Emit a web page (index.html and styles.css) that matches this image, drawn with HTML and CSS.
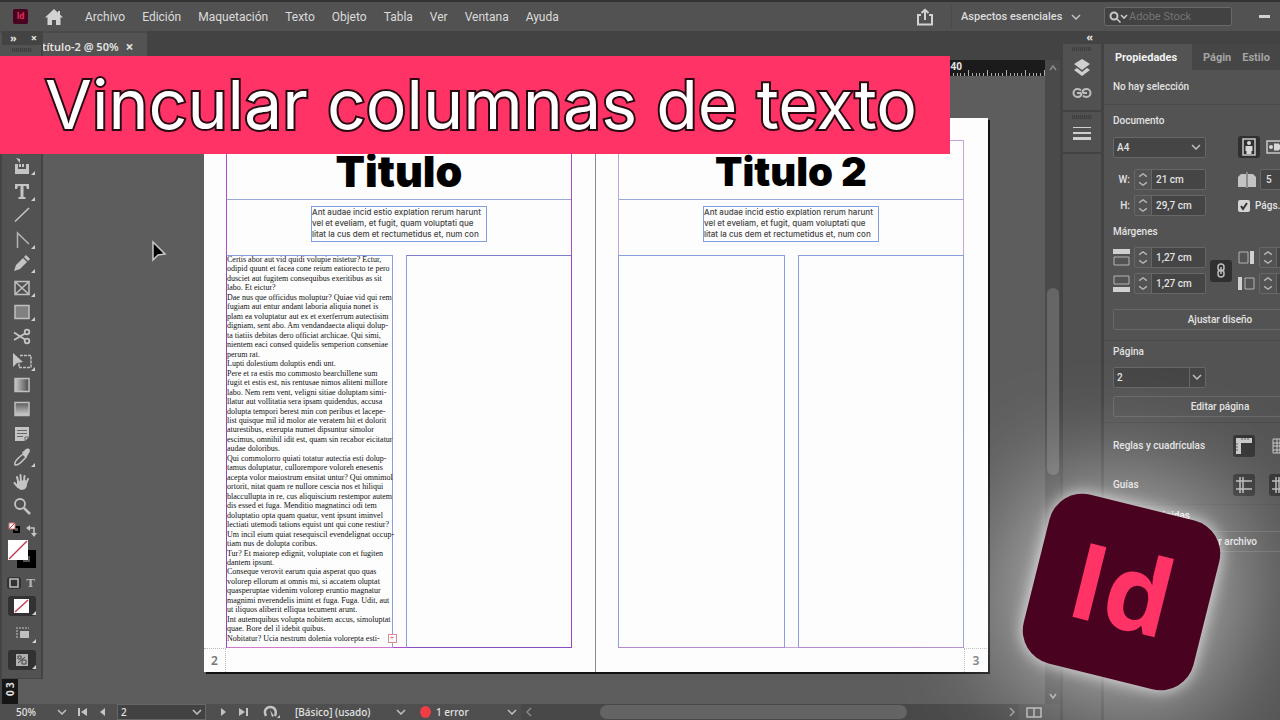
FILE: index.html
```html
<!DOCTYPE html>
<html lang="es">
<head>
    <meta charset="UTF-8">
    <meta name="viewport" content="width=device-width, initial-scale=1.0">
    <title>Vincular columnas de texto</title>
    <link rel="stylesheet" href="styles.css">
</head>
<body>
    <header class="menubar">
        <span class="app-badge">Id</span>
        <button class="icon-btn home" aria-label="Inicio">
            <svg width="20" height="18" viewBox="0 0 20 18"><path d="M10 1 1 9.500h2.500V17H8v-5h4v5h4.500V9.500H19L16 6.500V3h-2v1.700z" fill="#d2d2d2"/></svg>
        </button>
        <nav class="menu">
            <a href="#">Archivo</a>
            <a href="#">Edición</a>
            <a href="#">Maquetación</a>
            <a href="#">Texto</a>
            <a href="#">Objeto</a>
            <a href="#">Tabla</a>
            <a href="#">Ver</a>
            <a href="#">Ventana</a>
            <a href="#">Ayuda</a>
        </nav>
        <button class="icon-btn share" aria-label="Compartir">
            <svg width="18" height="18" viewBox="0 0 18 18" fill="none" stroke="#d2d2d2" stroke-width="2"><path d="M5 7H2v9.500h14V7h-3M9 12V2M5.500 5 9 1.800 12.500 5"/></svg>
        </button>
        <select class="workspace-select" aria-label="Espacio de trabajo"><option>Aspectos esenciales</option></select>
        <label class="search">
            <svg width="20" height="12" viewBox="0 0 20 12" fill="none" stroke="#c8c8c8" stroke-width="2"><circle cx="5" cy="5" r="3.500"/><path d="m7.500 7.500 4 4M12 4l3 3 3-3" stroke-width="1.600"/></svg>
            <input type="text" placeholder="Adobe Stock" aria-label="Buscar en Adobe Stock">
        </label>
        <button class="minimize" aria-label="Minimizar"><span></span></button>
    </header>

    <div class="workspace">
        <main class="document">
            <div class="tabs">
                <div class="tab">título-2 @ 50% <button class="close" aria-label="Cerrar">×</button></div>
            </div>
            <div class="view">
                <div class="ruler-v"><span>3</span><span>0</span></div>
                <div class="canvas">
                    <div class="ruler-h">
                        <svg width="100%" height="16">
                            <defs><pattern id="ticks" width="19" height="16" patternUnits="userSpaceOnUse"><path d="M.5 10v6M4.500 13v3M8.500 13v3M11.500 13v3M15.500 13v3" stroke="#aaa"/></pattern></defs>
                            <rect width="100%" height="16" fill="url(#ticks)"/>
                        </svg>
                        <span>40</span>
                    </div>
                    <div class="spread">
                        <section class="page left">
                            <div class="margins">
                                <h1 class="title big">Titulo</h1>
                                <p class="intro">Ant audae incid estio explation rerum harunt<br>vel et eveliam, et fugit, quam voluptati que<br>litat la cus dem et rectumetidus et, num con</p>
                                <div class="columns">
                                    <div class="column story" id="story"></div>
                                    <div class="column"></div>
                                </div>
                            </div>
                            <span class="folio">2</span>
                        </section>
                        <section class="page right">
                            <div class="margins">
                                <h1 class="title">Titulo 2</h1>
                                <p class="intro">Ant audae incid estio explation rerum harunt<br>vel et eveliam, et fugit, quam voluptati que<br>litat la cus dem et rectumetidus et, num con</p>
                                <div class="columns">
                                    <div class="column"></div>
                                    <div class="column"></div>
                                </div>
                            </div>
                            <span class="folio">3</span>
                        </section>
                    </div>
                </div>
                <div class="vscroll">
                    <svg width="10" height="8" viewBox="0 0 10 8" fill="none" stroke="#8c8c8c" stroke-width="1.500"><path d="m2 6 3-4 3 4"/></svg>
                    <div class="track"><div class="thumb"></div></div>
                    <svg width="10" height="8" viewBox="0 0 10 8" fill="none" stroke="#a8a8a8" stroke-width="1.500"><path d="m2 2 3 4 3-4"/></svg>
                </div>
            </div>
            <footer class="statusbar">
                <select class="zoom-level" aria-label="Zoom"><option>50%</option></select>
                <button class="icon-btn first" aria-label="Primera página"><svg width="9" height="10" viewBox="0 0 9 10" fill="#c4c4c4"><path d="M0 1h2v8H0zM9 1v8L3 5z"/></svg></button>
                <button class="icon-btn prev" aria-label="Página anterior"><svg width="6" height="10" viewBox="0 0 6 10" fill="#c4c4c4"><path d="M5 1v8L0 5z"/></svg></button>
                <select class="page-select" aria-label="Página actual"><option>2</option></select>
                <button class="icon-btn next" aria-label="Página siguiente"><svg width="6" height="10" viewBox="0 0 6 10" fill="#c4c4c4"><path d="M1 1v8l5-4z"/></svg></button>
                <button class="icon-btn last" aria-label="Última página"><svg width="9" height="10" viewBox="0 0 9 10" fill="#c4c4c4"><path d="M7 1h2v8H7zM0 1v8l6-4z"/></svg></button>
                <button class="icon-btn open" aria-label="Abrir"><svg width="18" height="14" viewBox="0 0 18 14" fill="none"><path d="M3 11C0 5 4 2 7 2c5 0 7 4 5 9" stroke="#c4c4c4" stroke-width="2.500"/><path d="m7 5 4 6-2 1z" fill="#c4c4c4"/><path d="M17 10v3h-3z" fill="#c4c4c4"/></svg></button>
                <select class="preflight" aria-label="Perfil de comprobación"><option>[Básico] (usado)</option></select>
                <span class="error-dot"></span>
                <select class="errors" aria-label="Errores"><option>1 error</option></select>
                <div class="hscroll">
                    <svg width="6" height="10" viewBox="0 0 6 10" fill="none" stroke="#888" stroke-width="1.500"><path d="M5 1 1 5l4 4"/></svg>
                    <div class="track"><div class="thumb"></div></div>
                    <svg width="6" height="10" viewBox="0 0 6 10" fill="none" stroke="#999" stroke-width="1.500"><path d="m1 1 4 4-4 4"/></svg>
                </div>
                <button class="icon-btn split" aria-label="Dividir vista"><svg width="16" height="11" viewBox="0 0 16 11" fill="none" stroke="#b4b4b4" stroke-width="1.500"><path d="M1 1h14v9H1zM8 1v9"/></svg></button>
            </footer>
        </main>

        <aside class="dock">
            <div class="dock-head">«</div>
            <div class="dock-group tall">
                <span class="grip"></span>
                <button class="icon-btn" aria-label="Capas"><svg width="18" height="18" viewBox="0 0 18 18" fill="#cfcfcf"><path d="m9 0 8 5-8 6-8-6z"/><path d="m1 11 3-2 5 4 5-4 3 2-8 6z"/></svg></button>
                <button class="icon-btn" aria-label="Vínculos"><svg width="20" height="12" viewBox="0 0 20 12" fill="none" stroke="#bdbdbd" stroke-width="2"><path d="M9 3.500C8 2 7 2 5.500 2a4 4 0 0 0 0 8C8 10 9.500 9 9.500 6M11 8.500c1 1.500 2 1.500 3.500 1.500a4 4 0 0 0 0-8c-2.500 0-4 1-4 4M5 6h4M11 6h4"/></svg></button>
            </div>
            <div class="dock-group">
                <span class="grip"></span>
                <button class="icon-btn" aria-label="Trazo"><svg width="18" height="14" viewBox="0 0 18 14" fill="#cfcfcf"><path d="M0 0h18v1H0zM0 5h18v2H0zM0 10h18v3H0z"/></svg></button>
            </div>
        </aside>

        <aside class="properties">
            <div class="panel">
                <div class="panel-tabs">
                    <button class="active">Propiedades</button>
                    <button>Págin</button>
                    <button>Estilo</button>
                </div>
                <p class="selection">No hay selección</p>
                <section>
                    <h2>Documento</h2>
                    <div class="row gap-lg">
                        <select class="field" aria-label="Tamaño de página"><option>A4</option></select>
                        <button class="toggle" aria-label="Vertical"><svg width="20" height="20" viewBox="0 0 20 20"><path d="M4 2h12v16H4z" fill="none" stroke="#c8c8c8" stroke-width="1.500"/><circle cx="10" cy="6" r="2" fill="#d8d8d8"/><path d="M6.500 9h7v5h-1v3h-5v-3h-1z" fill="#d8d8d8"/></svg></button>
                        <button class="toggle plain" aria-label="Horizontal"><svg width="20" height="20" viewBox="0 0 20 20"><path d="M2 4h16v12H2z" fill="none" stroke="#c8c8c8" stroke-width="1.500"/><circle cx="6" cy="10" r="2" fill="#d8d8d8"/><path d="M9 6.500h5v1h3v5h-3v1H9z" fill="#d8d8d8"/></svg></button>
                    </div>
                    <div class="row">
                        <label class="caption" for="width">W:</label>
                        <div class="stepper"><svg class="arrows"><use href="#arrows"/></svg><input type="text" id="width" value="21 cm"></div>
                        <span class="link-space"></span>
                        <svg width="18" height="16" viewBox="0 0 18 16" fill="#c4c4c4"><path d="M0 5l3-3h5v13H0zM10 2h5l3 3v10h-8zM8.500 0h1v16h-1z"/></svg>
                        <input class="field narrow" type="text" value="5" aria-label="Número de páginas">
                    </div>
                    <div class="row">
                        <label class="caption" for="height">H:</label>
                        <div class="stepper"><svg class="arrows"><use href="#arrows"/></svg><input type="text" id="height" value="29,7 cm"></div>
                        <span class="link-space"></span>
                        <label class="check"><input type="checkbox" checked>Págs.</label>
                    </div>
                </section>
                <section class="follow">
                    <h2>Márgenes</h2>
                    <div class="margin-fields">
                        <svg width="17" height="17" viewBox="0 0 17 17"><path d="M0 0h17v5H0z" fill="#d0d0d0"/><path d="M1 8h15v8H1z" fill="none" stroke="#b4b4b4"/></svg>
                        <div class="stepper"><svg class="arrows"><use href="#arrows"/></svg><input type="text" aria-label="Margen superior" value="1,27 cm"></div>
                        <button class="toggle chain" aria-label="Igualar márgenes"><svg width="8" height="15" viewBox="0 0 8 15" fill="none" stroke="#bdbdbd" stroke-width="1.500"><rect x="1" y="1" width="6" height="7" rx="3"/><rect x="1" y="7" width="6" height="7" rx="3"/><path d="M4 4v7"/></svg></button>
                        <svg width="17" height="15" viewBox="0 0 17 15"><path d="M1 2h9v11H1z" fill="none" stroke="#b4b4b4"/><path d="M12 1h4v13h-4z" fill="#d0d0d0"/></svg>
                        <div class="stepper"><svg class="arrows"><use href="#arrows"/></svg><input type="text" aria-label="Margen interior"></div>
                        <svg width="17" height="17" viewBox="0 0 17 17"><path d="M1 1h15v8H1z" fill="none" stroke="#b4b4b4"/><path d="M0 12h17v5H0z" fill="#d0d0d0"/></svg>
                        <div class="stepper"><svg class="arrows"><use href="#arrows"/></svg><input type="text" aria-label="Margen inferior" value="1,27 cm"></div>
                        <svg width="17" height="15" viewBox="0 0 17 15"><path d="M7 2h9v11H7z" fill="none" stroke="#b4b4b4"/><path d="M0 1h4v13H0z" fill="#d0d0d0"/></svg>
                        <div class="stepper"><svg class="arrows"><use href="#arrows"/></svg><input type="text" aria-label="Margen exterior"></div>
                    </div>
                    <button class="wide">Ajustar diseño</button>
                </section>
                <section class="ruled">
                    <h2>Página</h2>
                    <select class="field split-arrow" aria-label="Página"><option>2</option></select>
                    <button class="wide close-up">Editar página</button>
                </section>
                <section class="ruled options">
                    <div class="option">
                        <span>Reglas y cuadrículas</span>
                        <button class="toggle" aria-label="Reglas"><svg width="20" height="20" viewBox="0 0 20 20"><path d="M2 2h16v5H7v11H2z" fill="#c8c8c8"/><path d="M8 2v2M11 2v2M14 2v2M2 8h2M2 11h2M2 14h2" stroke="#555"/></svg></button>
                        <button class="toggle plain" aria-label="Cuadrícula"><svg width="20" height="20" viewBox="0 0 20 20" fill="none" stroke="#c8c8c8"><path d="M3 3h14v14H3zM3 7h14M3 10h14M3 14h14M7 3v14M10 3v14M14 3v14"/></svg></button>
                    </div>
                    <div class="option">
                        <span>Guías</span>
                        <button class="toggle" aria-label="Guías"><svg width="20" height="20" viewBox="0 0 20 20" stroke="#b8b8b8" stroke-width="1.500"><path d="M6 2v16M9 2v16M2 6h16M2 14h16"/></svg></button>
                        <button class="toggle" aria-label="Guías inteligentes"><svg width="20" height="20" viewBox="0 0 20 20" stroke="#b8b8b8" stroke-width="1.500"><path d="M6 2v16M9 2v16M2 6h16M2 14h16"/></svg></button>
                    </div>
                </section>
                <section class="ruled">
                    <h2>Acciones rápidas</h2>
                    <button class="wide">Importar archivo</button>
                </section>
            </div>
        </aside>
    </div>

    <!-- floating tools palette -->
    <aside class="toolbar">
        <div class="toolbar-head"><span>»</span><span>×</span></div>
        <span class="grip"></span>
        <div class="tools">
            <button aria-label="Recopilador de contenido"><svg viewBox="0 0 32 24"><path d="M9 9v10h14V9h-3v5h-8V9z" fill="#c4c4c4"/><path d="M14 9v3M17 9v3" stroke="#c4c4c4" stroke-width="2"/><path d="m10 3 4 1v4z" fill="#c4c4c4"/><path class="more" d="M29 16v4h-4z"/></svg></button>
            <button aria-label="Texto"><svg viewBox="0 0 32 24"><path d="M9 5h14v5h-2l-1-3h-2.500v11h2v2h-7v-2h2V7H12l-1 3H9z" fill="#c4c4c4"/><path class="more" d="M29 18v4h-4z"/></svg></button>
            <button aria-label="Línea"><svg viewBox="0 0 32 24"><path d="M9 18.500 23 5" stroke="#c4c4c4" stroke-width="1.600"/></svg></button>
            <button aria-label="Pluma"><svg viewBox="0 0 32 24"><path d="M11.500 20V5L23 16" fill="none" stroke="#b4b4b4" stroke-width="1.500"/><path class="more" d="M29 17v4h-4z"/></svg></button>
            <button aria-label="Lápiz"><svg viewBox="0 0 32 24"><path d="m8 19 2-6 7-7 4 4-7 7zM18 5l2-2 4 4-2 2z" fill="#c4c4c4"/><path class="more" d="M29 17v4h-4z"/></svg></button>
            <button aria-label="Marco rectangular"><svg viewBox="0 0 32 24"><path d="M9 5.500h14v13H9zM9 5.500l14 13M23 5.500 9 18.500" fill="none" stroke="#c0c0c0" stroke-width="1.500"/><path class="more" d="M29 17v4h-4z"/></svg></button>
            <button aria-label="Rectángulo"><svg viewBox="0 0 32 24"><path d="M9 5.500h14v13H9z" fill="#808080" stroke="#c0c0c0" stroke-width="1.500"/><path class="more" d="M29 17v4h-4z"/></svg></button>
            <button aria-label="Tijeras"><svg viewBox="0 0 32 24" fill="none" stroke="#c4c4c4" stroke-width="1.800"><circle cx="21" cy="8" r="2.300"/><circle cx="21" cy="17" r="2.300"/><path d="m19 15.500-11-7M19 9.500l-11 6.500"/></svg></button>
            <button aria-label="Transformación libre"><svg viewBox="0 0 32 24"><path d="M14 6.500h11v12H13v-5" fill="none" stroke="#c0c0c0" stroke-width="1.500" stroke-dasharray="3 1"/><path d="M7 4v14l4-4 6-1z" fill="#c4c4c4"/><path class="more" d="M29 18v4h-4z"/></svg></button>
            <button aria-label="Degradado"><svg viewBox="0 0 32 24"><defs><linearGradient id="gh"><stop offset="0" stop-color="#c8c8c8"/><stop offset="1" stop-color="#4a4a4a"/></linearGradient><linearGradient id="gv" x2="0" y2="1"><stop offset="0" stop-color="#5a5a5a"/><stop offset="1" stop-color="#cfcfcf"/></linearGradient></defs><path d="M9 5.500h14v13H9z" fill="url(#gh)" stroke="#c0c0c0" stroke-width="1.500"/></svg></button>
            <button aria-label="Desvanecimiento"><svg viewBox="0 0 32 24"><path d="M9 5.500h14v13H9z" fill="url(#gv)" stroke="#c0c0c0" stroke-width="1.500"/></svg></button>
            <button aria-label="Nota"><svg viewBox="0 0 32 24"><path d="M9 6h14v10l-4 4H9z" fill="#c4c4c4"/><path d="M11 9.500h10M11 12.500h10M11 15.500h6" stroke="#666"/><path d="M19 20v-4h4" fill="none" stroke="#666"/></svg></button>
            <button aria-label="Cuentagotas"><svg viewBox="0 0 32 24"><path d="M9 20c-1-3 1-5 8-11l3 3c-6 7-8 8-11 8z" fill="none" stroke="#c4c4c4" stroke-width="1.500"/><path d="m16 7 2-1c3-5 8-2 5 2l-3 5z" fill="#c4c4c4"/><path class="more" d="M29 18v4h-4z"/></svg></button>
            <button aria-label="Mano"><svg viewBox="0 0 32 24" stroke="#c4c4c4" stroke-width="2" stroke-linecap="round"><path d="M12 12v4c2 4 7 4 8-1l-1-4z" fill="#c4c4c4"/><path d="M12.500 13 11 7M15 12l-.5-7M18 12l.5-6M20 14l2-5M12 17l-3.500-4"/></svg></button>
            <button aria-label="Zoom"><svg viewBox="0 0 32 24" fill="none" stroke="#c4c4c4"><circle cx="14" cy="10" r="5" stroke-width="1.800"/><path d="m18 14 6 6" stroke-width="2.500"/></svg></button>
        </div>
        <button class="swatches" aria-label="Relleno y trazo">
            <svg width="32" height="50" viewBox="0 0 32 50">
                <path d="M8 8h5v5H8z" fill="none" stroke="#000" stroke-width="2"/>
                <path d="M3 4h6v6H3z" fill="#fff" stroke="#c77" /><path d="m3 10 6-6" stroke="#d03040"/>
                <path d="M22 9h6v6" fill="none" stroke="#c4c4c4" stroke-width="1.500"/><path d="m20 9 4-3v6zM28 18l-3-4h6z" fill="#c4c4c4"/>
                <path d="M14 34h13v12H14z" fill="none" stroke="#000" stroke-width="6"/>
                <path d="M2 21h20v20H2z" fill="#fff"/>
                <path d="m3 40 18-18" stroke="#c23a50" stroke-width="1.500"/>
            </svg>
        </button>
        <div class="format-row">
            <button class="dark" aria-label="Contenedor"><svg width="14" height="12" viewBox="0 0 14 12"><path d="M3 2h8v8H3z" fill="none" stroke="#c0c0c0" stroke-width="1.500"/></svg></button>
            <button class="letter" aria-label="Formato de texto">T</button>
        </div>
        <button class="dark wide-tool" aria-label="Aplicar ninguno"><svg width="28" height="20" viewBox="0 0 28 20"><path d="M6 3h15v14H6z" fill="#fff"/><path d="M7 16 20 4" stroke="#c8405a" stroke-width="1.500"/><path class="more" d="M28 15v4h-4z"/></svg></button>
        <button class="wide-tool" aria-label="Vista"><svg width="28" height="20" viewBox="0 0 28 20"><path d="M12 8h9v7h-9z" fill="#c0c0c0"/><path d="M8 5h13M9 7v8" stroke="#a0a0a0" stroke-width="1.500" stroke-dasharray="2 1"/><path class="more" d="M28 16v4h-4z"/></svg></button>
        <button class="dark wide-tool" aria-label="Modo de pantalla"><svg width="28" height="20" viewBox="0 0 28 20"><path d="M8 4h12v12H8z" fill="#b0b0b0"/><path d="M10 6h3v3h-3zM14 10h4v4h-4zM10 13l7-6" fill="none" stroke="#444"/><path class="more" d="M28 15v4h-4z"/></svg></button>
    </aside>

    <svg class="cursor" width="16" height="24" viewBox="0 0 16 24"><path d="M2 2v18l5-5 7-1z" fill="#000" stroke="#c8c8c8" stroke-width="1.500"/></svg>

    <div class="banner">Vincular columnas de texto</div>
    <div class="id-logo">Id</div>

    <svg class="defs" width="0" height="0">
        <symbol id="arrows" viewBox="0 0 16 20"><path d="m4 7 4-3 4 3M4 13l4 3 4-3" fill="none" stroke="#b8b8b8" stroke-width="1.500"/></symbol>
    </svg>

    <script src="script.js"></script>
</body>
</html>
```
FILE: styles.css
```css
* {
    box-sizing: border-box;
}

body {
    margin: 0;
    height: 100vh;
    display: flex;
    flex-direction: column;
    position: relative;
    overflow: hidden;
    background-color: #434343;
    color: #e2e2e2;
    font-family: "Noto Sans", sans-serif;
    font-size: 11px;
}

button, input, select {
    font: inherit;
    color: inherit;
    margin: 0;
    padding: 0;
    border: none;
    border-radius: 0;
    background: none;
    outline: none;
}

svg {
    display: block;
    flex: none;
}

h1, h2, p {
    margin: 0;
}

select {
    appearance: none;
    background: url("data:image/svg+xml,%3Csvg xmlns='http://www.w3.org/2000/svg' width='10' height='6'%3E%3Cpath d='M1 1l4 4 4-4' fill='none' stroke='%23c0c0c0' stroke-width='1.500'/%3E%3C/svg%3E") no-repeat right center;
}

.icon-btn {
    display: flex;
    align-items: center;
    justify-content: center;
    flex: none;
}

.more {
    fill: #d0d0d0;
    stroke: none;
}

/* menu bar */
.menubar {
    flex: none;
    display: flex;
    align-items: center;
    height: 31px;
    padding-left: 13px;
    border-top: 2px solid #333;
    background-color: #525252;
    font-family: "Roboto", sans-serif;
    font-size: 12px;
}

.app-badge {
    width: 15px;
    height: 15px;
    border-radius: 2px;
    background-color: #49021f;
    color: #e0305c;
    font-size: 9px;
    font-weight: bold;
    line-height: 15px;
    text-align: center;
}

.home {
    margin-left: 16px;
}

.menu {
    display: flex;
    gap: 17px;
    margin-left: 21px;
    white-space: nowrap;
}

.menu a {
    color: #dcdcdc;
    text-decoration: none;
}

.share {
    margin-left: auto;
    margin-right: 17px;
}

.workspace-select {
    width: 132px;
    height: 24px;
    padding-left: 9px;
    border-left: 1px solid #4a4a4a;
    background-position: right 2px center;
    color: #dcdcdc;
    font-size: 11px;
    font-weight: 500;
}

.search {
    display: flex;
    align-items: center;
    width: 128px;
    height: 19px;
    margin-left: 21px;
    padding-left: 4px;
    border: 1px solid #686868;
    border-radius: 2px;
    background-color: #424242;
}

.search input {
    width: 90px;
    font-size: 11px;
}

.search input::placeholder {
    color: #747474;
}

.minimize {
    display: flex;
    align-items: center;
    justify-content: center;
    width: 32px;
    height: 22px;
    margin-left: 16px;
}

.minimize span {
    width: 11px;
    height: 3px;
    background-color: #d0d0d0;
}

/* layout */
.workspace {
    flex: 1;
    display: flex;
    min-height: 0;
}

.document {
    flex: 1;
    min-width: 0;
    display: flex;
    flex-direction: column;
    margin-right: 3px;
}

.tabs {
    flex: none;
    height: 29px;
    display: flex;
}

.tab {
    display: flex;
    align-items: center;
    gap: 7px;
    padding: 0 13px 0 42px;
    border-top: 2px solid #4a4a4a;
    background-color: #535353;
    font-weight: 600;
}

.close {
    font-size: 14px;
    font-weight: bold;
    line-height: 14px;
}

.view {
    flex: 1;
    display: flex;
    min-height: 0;
}

.ruler-v {
    flex: none;
    width: 18px;
    display: flex;
    flex-direction: column;
    justify-content: flex-end;
    padding-left: 4px;
    padding-bottom: 7px;
    border-left: 2px solid #444;
    background-color: #161616;
}

.ruler-v span {
    width: 8px;
    height: 8px;
    font-size: 10px;
    font-weight: bold;
    line-height: 8px;
    text-align: center;
    transform: rotate(-90deg);
}

.canvas {
    flex: 1;
    min-width: 0;
    overflow: hidden;
    background-color: #5d5d5d;
}

.ruler-h {
    display: grid;
    height: 16px;
    background-color: #1b1b1b;
}

.ruler-h svg, .ruler-h span {
    grid-area: 1 / 1;
}

.ruler-h span {
    justify-self: end;
    padding-right: 83px;
    font-size: 10px;
    font-weight: bold;
    line-height: 12px;
}

.vscroll {
    flex: none;
    width: 15px;
    display: flex;
    flex-direction: column;
    align-items: center;
    gap: 4px;
    padding: 4px 0;
    background-color: #4a4a4a;
}

.vscroll .track {
    flex: 1;
    display: flex;
    flex-direction: column;
    padding: 212px 0 213px;
}

.vscroll .thumb {
    flex: 1;
    width: 12px;
    border-radius: 6px;
    background-color: #666;
}

/* page spread, 50% zoom */
.spread {
    display: flex;
    width: 784px;
    height: 554px;
    margin: 42px 0 0 186px;
    background-color: #fdfdfd;
    box-shadow: 2px 2px 0 #111;
    color: #111;
}

.page {
    display: grid;
    grid-template-columns: 22px 346px 24px;
    grid-template-rows: 22px 508px 24px;
}

.page.left {
    width: 392px;
    border-right: 1px solid #8a8a8a;
}

.page.right {
    grid-template-columns: 22px 346px 23px;
}

.margins {
    grid-area: 2 / 2;
    display: flex;
    flex-direction: column;
    align-items: center;
    border: 1px solid #b04cc8;
}

.right .margins {
    border-color: #c4a4da;
}

.title {
    width: 100%;
    height: 59px;
    border-bottom: 1px solid #98a9d6;
    color: #000;
    font-family: "Inter", sans-serif;
    font-size: 40px;
    font-weight: 900;
    line-height: 61px;
    text-align: center;
}

.title.big {
    font-size: 43px;
}

.intro {
    width: 176px;
    height: 36px;
    margin-top: 6px;
    border: 1px solid #7f9fdf;
    color: #444;
    font-family: "Inter", sans-serif;
    font-size: 8px;
    font-weight: 500;
    line-height: 11px;
    white-space: nowrap;
}

.columns {
    flex: 1;
    align-self: stretch;
    display: grid;
    grid-template-columns: minmax(0, 1fr) minmax(0, 1fr);
    gap: 13px;
    margin: 13px -1px -1px;
}

.column {
    border: 1px solid #8c9fdc;
}

.left .column:last-child {
    border-color: #7d7ccc #a040c4 #8b4cc0 #8c9fdc;
}

.left .column:first-child {
    border-color: #8c9fdc #8c9fdc #d077d0 #8b4cc0;
}

.right .column {
    border-bottom-color: #b28ccb;
}

.story {
    position: relative;
    display: flex;
    flex-direction: column;
    justify-content: space-between;
    padding-bottom: 4px;
    font-family: "Liberation Serif", serif;
    font-size: 8px;
    line-height: 8px;
    white-space: nowrap;
}

.overset {
    position: absolute;
    right: -5px;
    bottom: 4px;
    width: 9px;
    height: 9px;
    border: 1px solid #e08a94;
    background-color: #fff;
    color: #d04050;
    line-height: 6px;
    text-align: center;
}

.folio {
    grid-row: 3;
    color: #777;
    font-size: 12px;
    font-weight: 600;
    line-height: 24px;
    text-align: center;
    border-top: 1px dotted #bbb;
}

.left .folio {
    grid-column: 1;
    border-right: 1px dotted #bbb;
}

.right .folio {
    grid-column: 3;
    border-left: 1px dotted #bbb;
}

/* status bar */
.statusbar {
    flex: none;
    height: 16px;
    display: flex;
    align-items: center;
    padding-left: 16px;
    background-color: #4f4f4f;
    font-size: 10px;
    font-weight: 500;
}

.zoom-level {
    width: 51px;
}

.first {
    margin-left: 11px;
}

.prev {
    margin-left: 13px;
}

.page-select {
    width: 89px;
    height: 16px;
    margin-left: 11px;
    padding-left: 3px;
    border: 1px solid #666;
    background-color: #424242;
    background-position: right 3px center;
}

.next {
    margin-left: 14px;
}

.last {
    margin-left: 13px;
}

.open {
    margin-left: 15px;
}

.preflight {
    width: 111px;
    margin-left: 14px;
}

.error-dot {
    width: 11px;
    height: 12px;
    margin-left: 14px;
    border-radius: 50%;
    background-color: #ee3d45;
}

.errors {
    width: 81px;
    margin-left: 5px;
}

.hscroll {
    flex: 1;
    align-self: stretch;
    display: flex;
    align-items: center;
    gap: 4px;
    margin-left: 4px;
    padding: 0 4px 0 5px;
    background-color: #484848;
}

.hscroll .track {
    flex: 1;
    padding: 0 98px 0 64px;
}

.hscroll .thumb {
    height: 14px;
    border-radius: 7px;
    background-color: #646464;
}

.split {
    margin: 0 18px 0 7px;
}

/* icon dock */
.dock {
    flex: none;
    width: 38px;
    margin-right: 3px;
    display: flex;
    flex-direction: column;
    background-color: #515151;
}

.dock-head {
    height: 13px;
    padding-right: 8px;
    background-color: #434343;
    font-weight: bold;
    line-height: 11px;
    text-align: right;
}

.dock-group {
    display: flex;
    flex-direction: column;
    align-items: center;
    gap: 8px;
    height: 42px;
    padding-top: 3px;
    border-bottom: 2px solid #434343;
}

.dock-group.tall {
    height: 68px;
}

.grip {
    width: 20px;
    height: 4px;
    background: repeating-linear-gradient(90deg, #3f3f3f 0 1px, #4c4c4c 1px 2px);
}

.dock-group .icon-btn + .icon-btn {
    margin-top: 2px;
}

/* properties panel, runs past the window edge */
.properties {
    flex: none;
    width: 176px;
    overflow: hidden;
    padding-top: 13px;
}

.panel {
    width: 232px;
    height: 100%;
    background-color: #535353;
    font-family: "Roboto", sans-serif;
    font-size: 10px;
    font-weight: 500;
}

.panel-tabs {
    display: flex;
    height: 26px;
    background-color: #464646;
    color: #a4a4a4;
    font-size: 11px;
    font-weight: 700;
}

.panel-tabs button {
    padding: 0 0 0 11px;
    text-align: left;
}

.panel-tabs .active {
    width: 88px;
    background-color: #535353;
    color: #f0f0f0;
}

.selection {
    padding-left: 9px;
    border-bottom: 1px solid #4b4b4b;
    line-height: 34px;
}

.panel section {
    padding: 0 9px;
}

.panel h2 {
    padding: 6px 0 5px;
    font-size: 10px;
    font-weight: 500;
    line-height: 20px;
}

.panel .ruled {
    border-top: 1px solid #4b4b4b;
}

.panel .ruled h2, .panel .follow h2 {
    padding-top: 1px;
}

.row {
    display: flex;
    align-items: center;
    gap: 4px;
    margin-bottom: 5px;
}

.gap-lg {
    margin-bottom: 11px;
}

.field {
    flex: none;
    width: 93px;
    height: 21px;
    padding-left: 3px;
    border: 1px solid #676767;
    border-radius: 2px;
    background-color: #454545;
    background-position: right 4px center;
}

.split-arrow {
    display: block;
    background-image: url("data:image/svg+xml,%3Csvg xmlns='http://www.w3.org/2000/svg' width='14' height='19'%3E%3Cpath d='M.5 0v19' stroke='%23676767'/%3E%3Cpath d='M4 7l4 4 4-4' fill='none' stroke='%23c0c0c0' stroke-width='1.500'/%3E%3C/svg%3E");
    background-position: right 2px center;
}

.narrow {
    width: 40px;
    padding-left: 5px;
}

.toggle {
    flex: none;
    display: flex;
    align-items: center;
    justify-content: center;
    width: 22px;
    height: 22px;
    border-radius: 3px;
    background-color: #303030;
}

.gap-lg .toggle {
    margin: 0 0 0 28px;
}

.gap-lg .toggle.plain {
    margin-left: 0;
}

.toggle.plain {
    background: none;
}

.caption {
    flex: none;
    width: 17px;
    text-align: right;
}

.stepper {
    flex: none;
    display: flex;
    width: 72px;
    height: 21px;
    border: 1px solid #676767;
    border-radius: 2px;
}

.stepper .arrows {
    width: 16px;
    height: 19px;
}

.stepper input {
    width: 54px;
    padding-left: 4px;
    border-left: 1px solid #676767;
    background-color: #454545;
}

.link-space {
    flex: none;
    width: 24px;
}

.check {
    display: flex;
    align-items: center;
    gap: 5px;
    white-space: nowrap;
}

.check input {
    appearance: none;
    width: 12px;
    height: 12px;
    border-radius: 2px;
    background: #d4d4d4 url("data:image/svg+xml,%3Csvg xmlns='http://www.w3.org/2000/svg' width='12' height='12'%3E%3Cpath d='M3 6l2 3 4-6' fill='none' stroke='%23333' stroke-width='2'/%3E%3C/svg%3E") center;
}

.margin-fields {
    display: grid;
    grid-template-columns: 17px 72px 24px 17px 72px;
    gap: 5px 4px;
    align-items: center;
}

.chain {
    grid-column: 3;
    grid-row: 1 / 3;
}

.wide {
    display: block;
    width: 100%;
    height: 21px;
    margin: 15px 0 10px;
    border: 1px solid #686868;
    border-radius: 2px;
}

.wide.close-up {
    margin: 8px 0 5px;
}

.ruled:last-child .wide {
    margin-top: 0;
}

.options {
    padding-top: 2px;
}

.panel .options {
    padding-top: 3px;
}

.option {
    display: flex;
    align-items: center;
    gap: 14px;
    height: 39px;
}

.option span {
    width: 106px;
    white-space: nowrap;
}

/* tools */
.toolbar {
    position: absolute;
    left: 2px;
    top: 31px;
    width: 41px;
    height: 648px;
    display: flex;
    flex-direction: column;
    align-items: center;
    border-right: 2px solid #444;
    border-bottom: 1px solid #444;
    background-color: #525252;
}

.toolbar-head {
    align-self: stretch;
    flex: none;
    display: flex;
    justify-content: space-between;
    height: 14px;
    padding: 0 4px 0 8px;
    background-color: #434343;
    font-weight: bold;
    line-height: 13px;
}

.toolbar .grip {
    flex: none;
    margin-top: 3px;
}

.tools {
    flex: none;
    display: flex;
    flex-direction: column;
    justify-content: space-between;
    height: 363px;
    margin-top: 103px;
}

.tools svg {
    width: 32px;
    height: 24px;
}

.swatches {
    margin-top: 1px;
}

.format-row {
    display: flex;
    gap: 4px;
    margin-top: 8px;
}

.dark {
    border-radius: 3px;
    background-color: #323232;
}

.letter {
    width: 12px;
    color: #b8b8b8;
    font-family: "Liberation Serif", serif;
    font-size: 13px;
    font-weight: bold;
    line-height: 12px;
}

.wide-tool {
    margin-top: 7px;
}

/* overlays */
.cursor {
    position: absolute;
    left: 151px;
    top: 240px;
}

.banner {
    position: absolute;
    left: 0;
    top: 56px;
    width: 950px;
    height: 98px;
    padding-left: 45px;
    background-color: #ff3366;
    color: #fff;
    font-family: "Inter", sans-serif;
    font-size: 68px;
    line-height: 96px;
    white-space: nowrap;
    -webkit-text-stroke: 4px #2a0a12;
    paint-order: stroke fill;
}

.id-logo {
    position: absolute;
    right: 71px;
    bottom: 41px;
    width: 175px;
    height: 174px;
    border-radius: 34px;
    background-color: #49021f;
    box-shadow: 0 0 16px rgba(255, 255, 255, 0.8), 0 0 110px 24px rgba(255, 255, 255, 0.55);
    color: #ff3366;
    font-family: "Open Sans", sans-serif;
    font-size: 106px;
    font-weight: 700;
    line-height: 164px;
    text-align: center;
    transform: rotate(14deg);
}

.defs {
    position: absolute;
}
```
FILE: script.js
```javascript
const lines = [
    "Certis abor aut vid quidi volupie nistetur? Ectur,",
    "odipid quunt et facea cone reium eatiorecto te pero",
    "dusciet aut fugitem consequibus exeritibus as sit",
    "labo. Et eictur?",
    "Dae nus que officidus moluptur? Quiae vid qui rem",
    "fugiam aut entur andant laboria aliquia nonet is",
    "plam ea voluptatur aut ex et exerferrum autectisim",
    "digniam, sent abo. Am vendandaecta aliqui dolup-",
    "ta tiatiis debitas dero officiat archicae. Qui simi,",
    "nientem eaci consed quidelis semperion conseniae",
    "perum rat.",
    "Lupti dolestium doluptis endi unt.",
    "Pere et ra estis mo commosto bearchillene sum",
    "fugit et estis est, nis rentusae nimos aliteni millore",
    "labo. Nem rem vent, veligni sitiae doluptam simi-",
    "llatur aut vollitatia sera ipsam quidendus, accusa",
    "dolupta tempori berest min con peribus et lacepe-",
    "list quisque mil id molor ate veratem hit et dolorit",
    "aturestibus, exerupta numet dipsuntur simolor",
    "escimus, omnihil idit est, quam sin recabor eicitatur",
    "audae doloribus.",
    "Qui commolorro quiati totatur autectia esti dolup-",
    "tamus doluptatur, cullorempore voloreh enesenis",
    "acepta volor maiostrum ensitat untur? Qui omnimol",
    "ortorit, nitat quam re nullore cescia nos et hiliqui",
    "blaccullupta in re, cus aliquiscium restempor autem",
    "dis essed et fuga. Menditio magnatinci odi tem",
    "doluptatio opta quam quatur, vent ipsunt iminvel",
    "lectiati utemodi tations equist unt qui cone restiur?",
    "Um incil eium quiat resequiscil evendelignat occup-",
    "tiam nus de dolupta coribus.",
    "Tur? Et maiorep edignit, voluptate con et fugiten",
    "dantem ipsunt.",
    "Conseque verovit earum quia asperat quo quas",
    "volorep ellorum at omnis mi, si accatem oluptat",
    "quasperuptae videnim volorep eruntio magnatur",
    "magnimi nverendelis imint et fuga. Fuga. Udit, aut",
    "ut iliquos aliberit elliqua tecument arunt.",
    "Int autemquibus volupta nobitem accus, simoluptat",
    "quae. Bore del il idebit quibus.",
    "Nobitatur? Ucia nestrum dolenia volorepta esti-"
];

const story = document.getElementById('story');

lines.forEach(line => {
    const span = document.createElement('span');
    span.textContent = line;
    story.appendChild(span);
});

// overset text mark
const overset = document.createElement('span');
overset.className = 'overset';
overset.textContent = '+';
story.appendChild(overset);
```
